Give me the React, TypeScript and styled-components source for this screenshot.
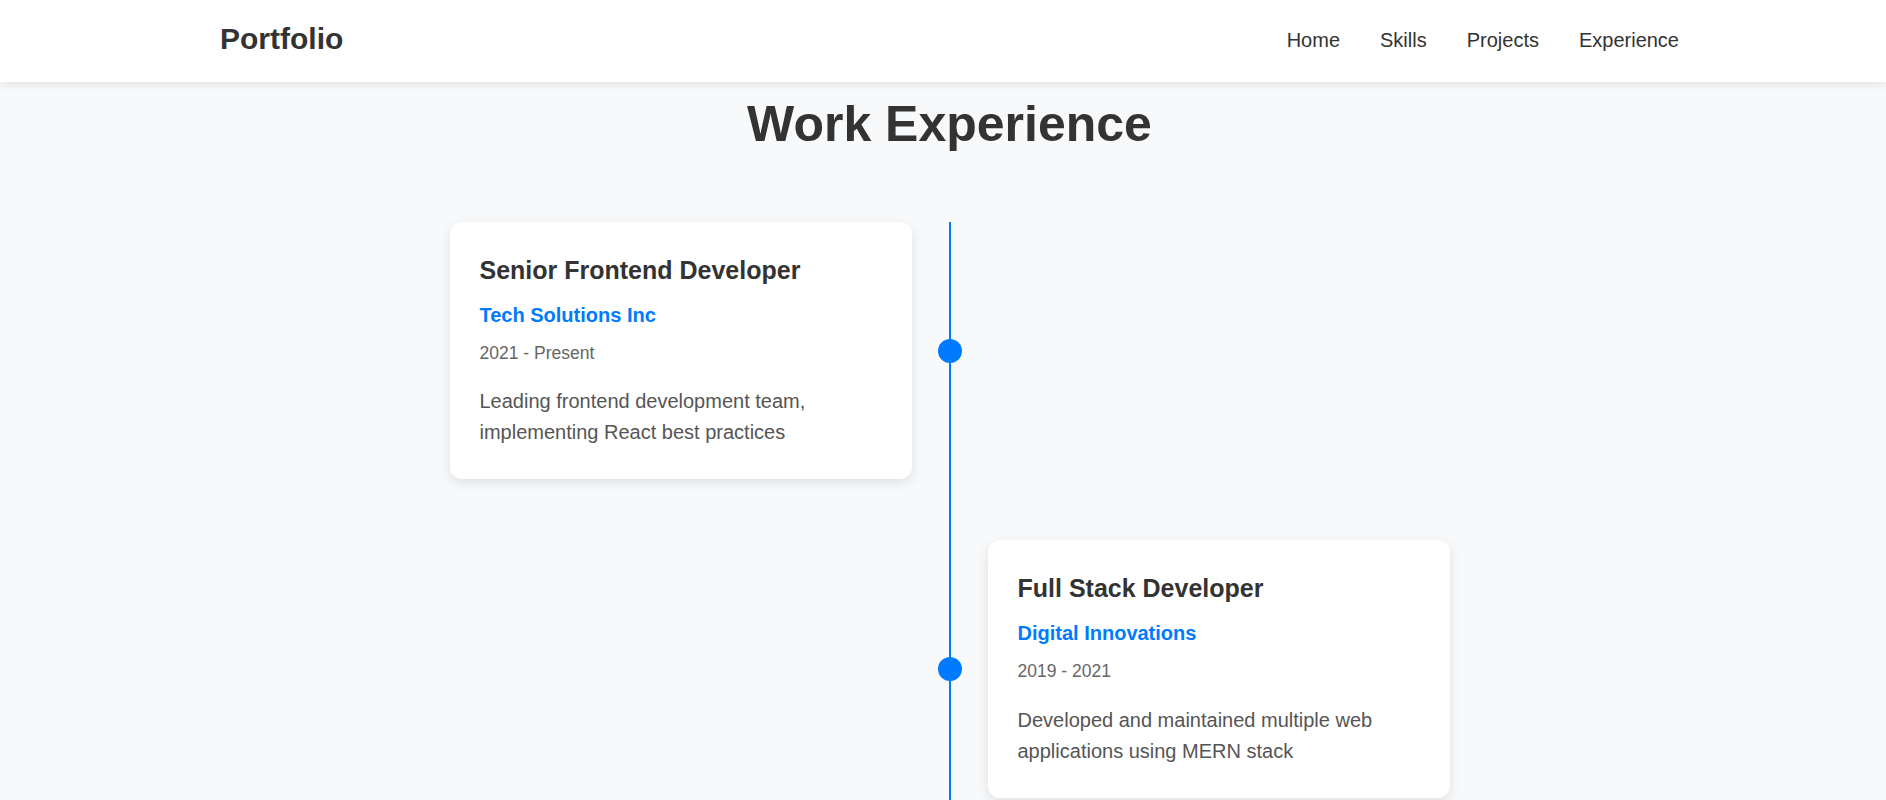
import { FC } from 'react';
import styled, { createGlobalStyle } from 'styled-components';

interface IJob {
  id: number,
  title: string,
  company: string,
  period: string,
  description: string
}

const jobs: IJob[] = [
  {
    id: 1,
    title: 'Senior Frontend Developer',
    company: 'Tech Solutions Inc',
    period: '2021 - Present',
    description: 'Leading frontend development team, implementing React best practices'
  },
  {
    id: 2,
    title: 'Full Stack Developer',
    company: 'Digital Innovations',
    period: '2019 - 2021',
    description: 'Developed and maintained multiple web applications using MERN stack'
  }
]

const GlobalStyle = createGlobalStyle`
  * {
    box-sizing: border-box;
  }

  body {
    margin: 0;
    background: #f8f9fa;
    font-family: "Liberation Sans", Arial, sans-serif;
    color: #333333;
    overflow: hidden;
  }
`

const Header = styled.header`
  display: flex;
  align-items: center;
  justify-content: space-between;
  height: 82px;
  padding: 0 207px 2px 220px;
  background: #ffffff;
  box-shadow: 0 2px 10px rgba(0, 0, 0, 0.1);
  position: relative;
  z-index: 1;
`

const Logo = styled.div`
  margin-bottom: 3px;
  font-size: 30px;
  font-weight: 700;
  color: #333333;
  line-height: 1.1;
`

const NavLinks = styled.nav`
  display: flex;
  gap: 40px;
`

const NavLink = styled.a`
  font-size: 20px;
  color: #333333;
  text-decoration: none;
  cursor: pointer;
`

const Section = styled.section`
  padding: 0 0 0 13px;
`

const SectionTitle = styled.h2`
  margin: 12px 0 68px;
  font-size: 50px;
  line-height: 1.2;
  font-weight: 700;
  text-align: center;
  color: #333333;
`

const Timeline = styled.div`
  position: relative;
  max-width: 1000px;
  margin: 0 auto;

  &::before {
    content: '';
    position: absolute;
    top: 0;
    bottom: -200px;
    left: 50%;
    width: 2px;
    transform: translateX(-50%);
    background: #007bff;
  }
`

const TimelineItem = styled.div<{ $side: 'left' | 'right' }>`
  position: relative;
  width: 50%;
  margin-bottom: 61px;
  margin-left: ${({ $side }) => ($side === 'right' ? '50%' : '0')};
  padding: ${({ $side }) => ($side === 'right' ? '0 0 0 38px' : '0 38px 0 0')};
`

const Dot = styled.span<{ $side: 'left' | 'right' }>`
  position: absolute;
  top: 50%;
  ${({ $side }) => ($side === 'right' ? 'left: -12px;' : 'right: -12px;')}
  width: 24px;
  height: 24px;
  margin-top: -12px;
  border-radius: 50%;
  background: #007bff;
`

const Card = styled.div`
  padding: 32px 30px 31px;
  background: #ffffff;
  border-radius: 12px;
  box-shadow: 0 4px 12px rgba(0, 0, 0, 0.1);
`

const JobTitle = styled.h3`
  margin: 0;
  font-size: 25px;
  line-height: 1.3;
  font-weight: 700;
  color: #333333;
`

const Company = styled.h4`
  margin: 15px 0 0;
  font-size: 20px;
  line-height: 1.3;
  font-weight: 700;
  color: #007bff;
`

const Period = styled.p`
  margin: 14px 0 0;
  font-size: 17.5px;
  line-height: 1.3;
  color: #666666;
`

const Description = styled.p`
  margin: 22px 0 0;
  font-size: 20px;
  line-height: 31px;
  color: #555555;
`

const App: FC = () => {
  return (
    <>
      <GlobalStyle />
      <Header>
        <Logo>Portfolio</Logo>
        <NavLinks>
          <NavLink>Home</NavLink>
          <NavLink>Skills</NavLink>
          <NavLink>Projects</NavLink>
          <NavLink>Experience</NavLink>
        </NavLinks>
      </Header>
      <Section>
        <SectionTitle>Work Experience</SectionTitle>
        <Timeline>
          {jobs.map((job, index) => {
            const side = index % 2 === 0 ? 'left' : 'right';
            return (
              <TimelineItem key={job.id} $side={side}>
                <Card>
                  <JobTitle>{job.title}</JobTitle>
                  <Company>{job.company}</Company>
                  <Period>{job.period}</Period>
                  <Description>{job.description}</Description>
                </Card>
                <Dot $side={side} />
              </TimelineItem>
            )
          })}
        </Timeline>
      </Section>
    </>
  )
}

export default App;
